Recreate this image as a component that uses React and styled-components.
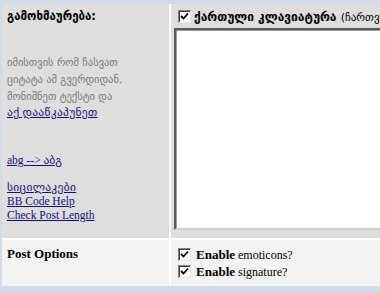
import styled, { createGlobalStyle } from "styled-components";

const Global = createGlobalStyle`
  html, body { margin: 0; padding: 0; }
  body {
    background: #d1dbe8;
    font-family: "Liberation Serif", "DejaVu Sans", serif;
    overflow: hidden;
  }
`;

const Page = styled.div`
  width: 380px;
  height: 293px;
  padding: 4px 0 0 2px;
  box-sizing: border-box;
  overflow: hidden;
`;

const Table = styled.div`
  display: grid;
  grid-template-columns: 167px 1fr;
  grid-template-rows: 234px 46px;
  column-gap: 2px;
  row-gap: 2px;
  background: #ffffff;
  width: 440px;
`;

const Cell = styled.div`
  background: ${(p) => (p.$light ? "#f3f3f3" : "#dedede")};
  padding: ${(p) => p.$pad || "5px 5px"};
  box-sizing: border-box;
  overflow: hidden;
`;

const Title = styled.div`
  font-family: "DejaVu Sans", sans-serif;
  font-weight: bold;
  font-size: 11.5px;
  color: #000;
  line-height: 14px;
`;

const LatinTitle = styled.div`
  font-weight: bold;
  font-size: 13px;
  color: #000;
  line-height: 16px;
  margin-top: 1px;
`;

const Hint = styled.div`
  font-family: "DejaVu Sans", sans-serif;
  font-size: 10.5px;
  color: #7a7a7a;
  line-height: 17px;
  margin-top: 31px;
`;

const Links = styled.div`
  display: flex;
  flex-direction: column;
  align-items: flex-start;
  margin-top: ${(p) => p.$top || "0"};
  line-height: 14px;
`;

const Link = styled.a`
  font-family: "Liberation Serif", "DejaVu Sans", serif;
  font-size: ${(p) => (p.$geo ? "11.5px" : "11.5px")};
  letter-spacing: ${(p) => (p.$geo ? "0.3px" : "0")};
  color: #10107e;
  text-decoration: underline;
  cursor: pointer;
  line-height: ${(p) => p.$lh || "14px"};
`;

const CheckRow = styled.label`
  display: flex;
  align-items: center;
  gap: ${(p) => p.$gap || "5px"};
  white-space: nowrap;
  height: ${(p) => p.$h || "17px"};
  margin-left: ${(p) => p.$indent || "0"};
`;

const Box = styled.span`
  display: inline-flex;
  align-items: center;
  justify-content: center;
  width: 13px;
  height: 13px;
  box-sizing: border-box;
  background: #ffffff;
  border-top: 1px solid #808080;
  border-left: 1px solid #808080;
  border-bottom: 1px solid #e8e8e8;
  border-right: 1px solid #e8e8e8;
  box-shadow: inset 1px 1px 0 #404040;
  flex-shrink: 0;
`;

const GeoLabel = styled.span`
  font-family: "DejaVu Sans", sans-serif;
  font-weight: bold;
  font-size: 12px;
  color: #000;
  span {
    font-weight: normal;
    font-size: 11px;
  }
`;

const OptLabel = styled.span`
  font-size: 12px;
  color: #000;
  b {
    font-weight: bold;
    font-size: 13px;
  }
`;

const TextArea = styled.div`
  margin-top: 4px;
  width: 400px;
  height: 202px;
  background: #ffffff;
  box-sizing: border-box;
  border-top: 2px solid #5a5a5a;
  border-left: 2px solid #5a5a5a;
  border-bottom: 2px solid #d4d0c8;
  box-shadow: inset 1px 1px 0 #9a9a9a;
`;

const Options = styled.div`
  display: flex;
  flex-direction: column;
  padding-top: 6px;
`;

const Check = () => (
  <Box>
    <svg width="9" height="9" viewBox="0 0 9 9">
      <path d="M1 4 L3.5 6.5 L8 1.5" stroke="#000" strokeWidth="1.8" fill="none" />
    </svg>
  </Box>
);

export default function App() {
  return (
    <Page>
      <Global />
      <Table>
        <Cell>
          <Title>გამოხმაურება:</Title>
          <Hint>
            იმისთვის რომ ჩასვათ
            <br />
            ციტატა ამ გვერდიდან,
            <br />
            მონიშნეთ ტექსტი და
          </Hint>
          <Links>
            <Link $geo $lh="15px">აქ დააწკაპუნეთ</Link>
          </Links>
          <Links $top="33px">
            <Link>abg --&gt; აბგ</Link>
          </Links>
          <Links $top="13px">
            <Link $geo>სიცილაკები</Link>
            <Link>BB Code Help</Link>
            <Link>Check Post Length</Link>
          </Links>
        </Cell>
        <Cell $pad="5px 0 0 3px">
          <CheckRow $h="15px" $indent="4px" $gap="3px">
            <Check />
            <GeoLabel>
              ქართული კლავიატურა <span>(ჩართვა)</span>
            </GeoLabel>
          </CheckRow>
          <TextArea />
        </Cell>
        <Cell $light>
          <LatinTitle>Post Options</LatinTitle>
        </Cell>
        <Cell $light $pad="0 0 0 7px">
          <Options>
            <CheckRow>
              <Check />
              <OptLabel>
                <b>Enable</b> emoticons?
              </OptLabel>
            </CheckRow>
            <CheckRow>
              <Check />
              <OptLabel>
                <b>Enable</b> signature?
              </OptLabel>
            </CheckRow>
          </Options>
        </Cell>
      </Table>
    </Page>
  );
}
